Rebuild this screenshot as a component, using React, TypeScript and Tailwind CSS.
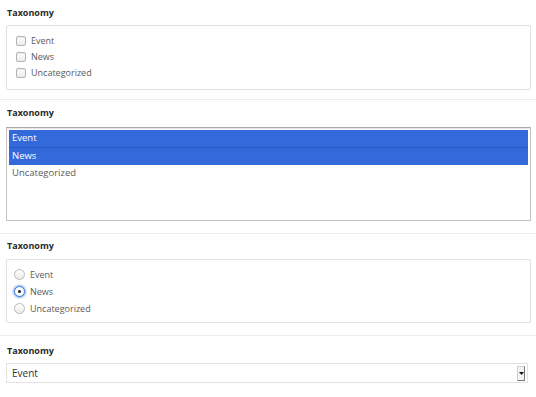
import React from "react";

const terms = ["Event", "News", "Uncategorized"];

const Label: React.FC<{ text: string }> = ({ text }) => (
  <div className="h-4 flex items-center pl-[7px] text-[9px] font-bold text-[#2a2a2a]">{text}</div>
);

const Checkbox = () => (
  <span className="w-[10px] h-[10px] rounded-[2px] border border-[#b4b4b4] bg-gradient-to-b from-white to-[#ececec] shadow-[inset_0_1px_1px_rgba(0,0,0,0.08)]" />
);

const Radio: React.FC<{ checked?: boolean }> = ({ checked }) =>
  checked ? (
    <span className="w-[11px] h-[11px] rounded-full border border-[#3b7be0] bg-white flex items-center justify-center shadow-[0_0_2px_1px_rgba(59,123,224,0.6)]">
      <span className="w-[3px] h-[3px] rounded-full bg-[#222]" />
    </span>
  ) : (
    <span className="w-[11px] h-[11px] rounded-full border border-[#b9b9b9] bg-gradient-to-b from-white to-[#ebebeb]" />
  );

export default function App() {
  return (
    <div className="w-[536px] h-[397px] bg-white overflow-hidden font-['Open_Sans',sans-serif]">
      {/* checkboxes */}
      <div className="pt-[5px] pb-[9px] border-b border-[#ececec]">
        <Label text="Taxonomy" />
        <div className="mt-1 ml-[6px] mr-[5px] h-[65px] border border-[#e0e0e0] rounded-[2px] pt-[7px] pl-[9px]">
          {terms.map((t) => (
            <div key={t} className="h-4 flex items-center gap-[5px] text-[9px] text-[#5a5a5a]">
              <Checkbox />
              <span>{t}</span>
            </div>
          ))}
        </div>
      </div>

      {/* multi select listbox */}
      <div className="pt-[5px] pb-3 border-b border-[#ececec]">
        <Label text="Taxonomy" />
        <div className="mt-[6px] ml-[6px] mr-[5px] h-[94px] border border-[#c4c4c4] border-t-[#a8a8a8] shadow-[inset_0_1px_1px_rgba(0,0,0,0.1)] p-[2px] text-[9.5px]">
          <div className="h-[18px] flex items-center pl-[3px] bg-[#3469db] text-white border-b border-[#2a58c0]">Event</div>
          <div className="h-[17px] flex items-center pl-[3px] bg-[#3469db] text-white">News</div>
          <div className="h-[17px] flex items-center pl-[3px] text-[#5a5a5a]">Uncategorized</div>
        </div>
      </div>

      {/* radios */}
      <div className="pt-1 pb-3 border-b border-[#ececec]">
        <Label text="Taxonomy" />
        <div className="mt-[5px] ml-[6px] mr-[5px] h-[64px] border border-[#e0e0e0] rounded-[2px] pt-[6px] pl-[7px]">
          {terms.map((t, i) => (
            <div key={t} className="h-[17px] flex items-center gap-[5px] text-[9px] text-[#5a5a5a]">
              <Radio checked={i === 1} />
              <span>{t}</span>
            </div>
          ))}
        </div>
      </div>

      {/* dropdown */}
      <div className="pt-[7px]">
        <Label text="Taxonomy" />
        <div className="mt-1 ml-[6px] mr-[8px] h-5 border border-[#e2e2e2] flex items-center justify-between pl-[5px] pr-[2px] text-[10px] text-[#333]">
          <span>Event</span>
          <span className="w-[8px] h-[15px] border border-[#d0d0d0] border-r-[#777] border-b-[#777] bg-[#f4f4f4] flex items-center justify-center">
            <svg width="5" height="3" viewBox="0 0 5 3">
              <path d="M0 0h5L2.5 3z" fill="#111" />
            </svg>
          </span>
        </div>
      </div>
    </div>
  );
}
